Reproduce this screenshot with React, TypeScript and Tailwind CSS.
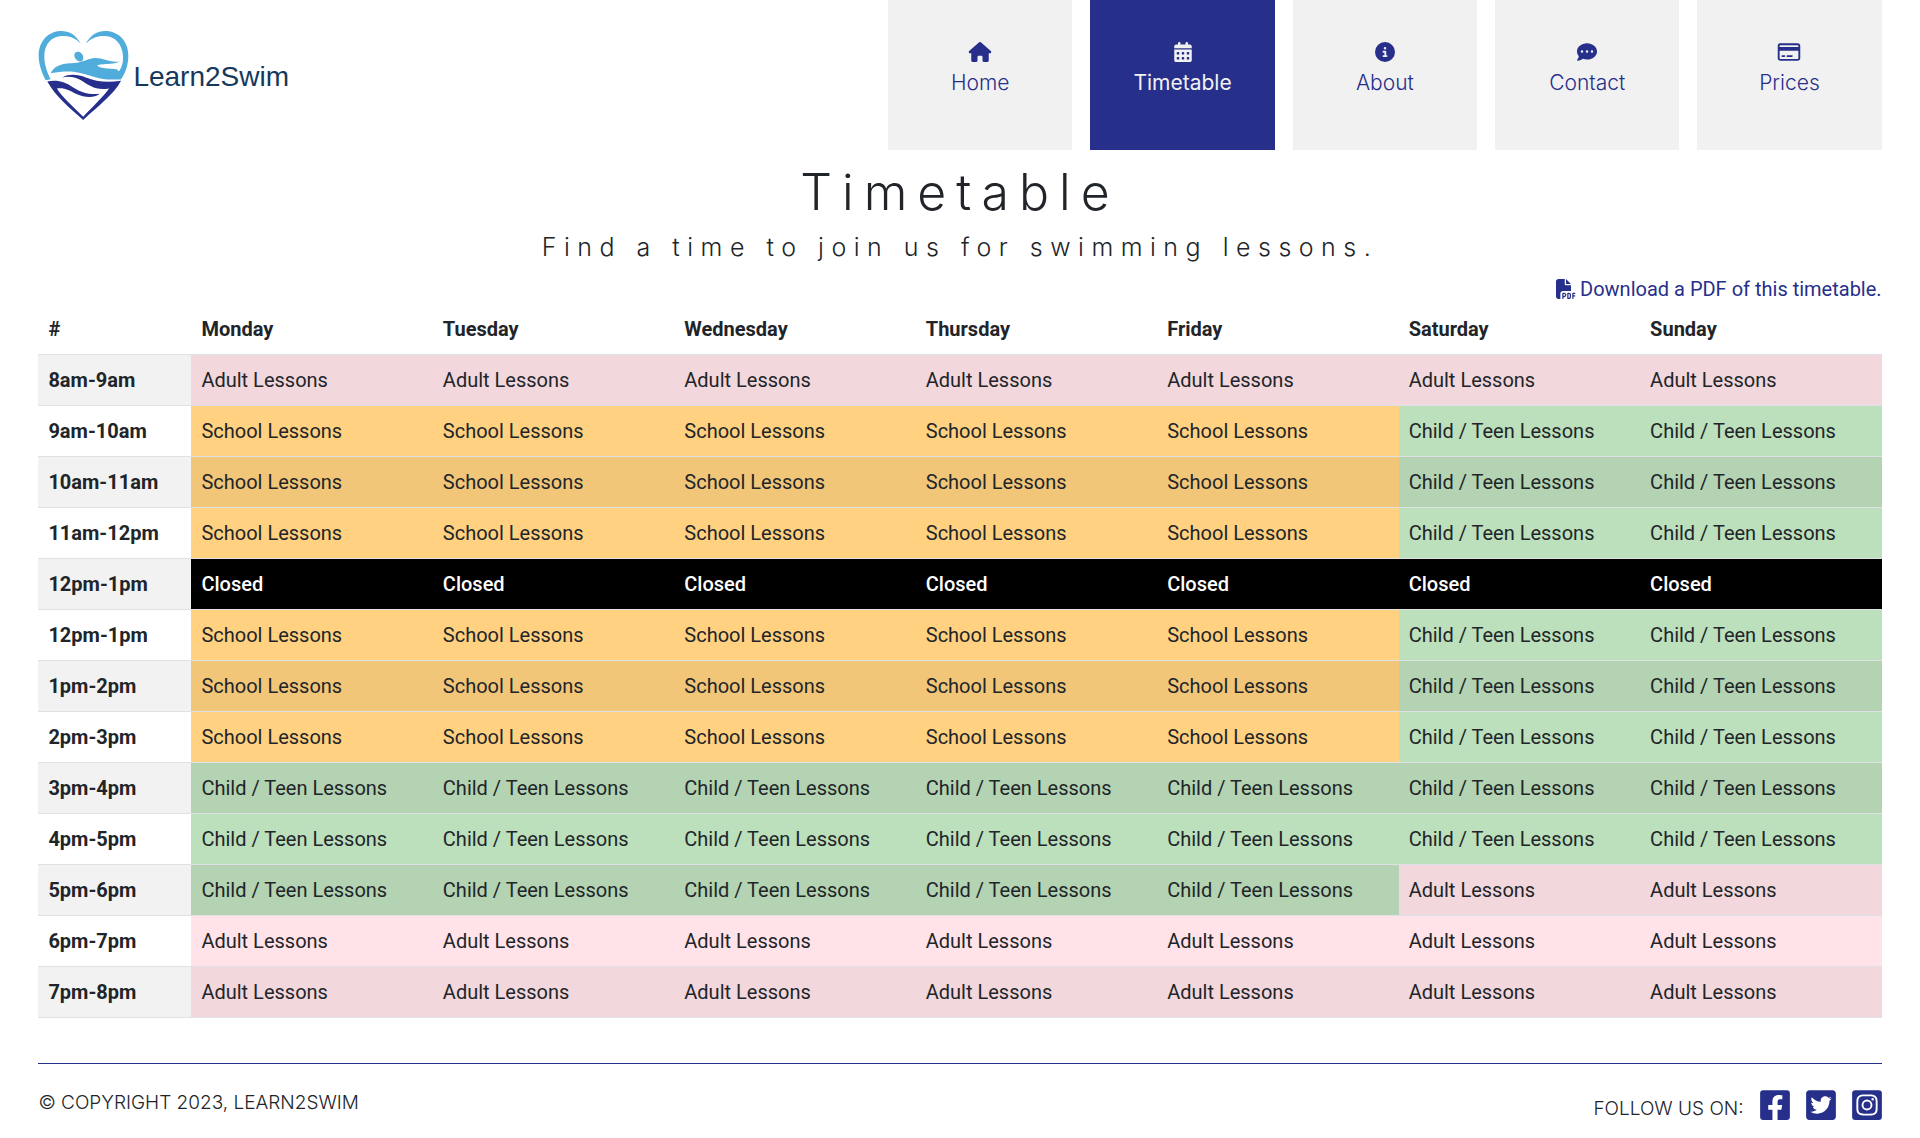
import React from "react";
import {
  FaHouse,
  FaCalendarDays,
  FaCircleInfo,
  FaCommentDots,
  FaRegCreditCard,
  FaFilePdf,
} from "react-icons/fa6";
import { FaFacebookSquare, FaTwitterSquare, FaInstagramSquare } from "react-icons/fa";

type Kind = "adult" | "school" | "child" | "closed";

const LABELS: Record<Kind, string> = {
  adult: "Adult Lessons",
  school: "School Lessons",
  child: "Child / Teen Lessons",
  closed: "Closed",
};

const PLAIN: Record<Kind, string> = {
  adult: "bg-[#ffe3e8]",
  school: "bg-[#ffd180]",
  child: "bg-[#bcdfbc]",
  closed: "bg-black font-medium text-white",
};

const STRIPED: Record<Kind, string> = {
  adult: "bg-[#f2d7dc]",
  school: "bg-[#f2c679]",
  child: "bg-[#b3d3b2]",
  closed: "bg-black font-medium text-white",
};

const DAYS = ["Monday", "Tuesday", "Wednesday", "Thursday", "Friday", "Saturday", "Sunday"];

const ROWS: { time: string; weekday: Kind; weekend: Kind }[] = [
  { time: "8am-9am", weekday: "adult", weekend: "adult" },
  { time: "9am-10am", weekday: "school", weekend: "child" },
  { time: "10am-11am", weekday: "school", weekend: "child" },
  { time: "11am-12pm", weekday: "school", weekend: "child" },
  { time: "12pm-1pm", weekday: "closed", weekend: "closed" },
  { time: "12pm-1pm", weekday: "school", weekend: "child" },
  { time: "1pm-2pm", weekday: "school", weekend: "child" },
  { time: "2pm-3pm", weekday: "school", weekend: "child" },
  { time: "3pm-4pm", weekday: "child", weekend: "child" },
  { time: "4pm-5pm", weekday: "child", weekend: "child" },
  { time: "5pm-6pm", weekday: "child", weekend: "adult" },
  { time: "6pm-7pm", weekday: "adult", weekend: "adult" },
  { time: "7pm-8pm", weekday: "adult", weekend: "adult" },
];

const NAV = [
  { label: "Home", Icon: FaHouse },
  { label: "Timetable", Icon: FaCalendarDays, active: true },
  { label: "About", Icon: FaCircleInfo },
  { label: "Contact", Icon: FaCommentDots },
  { label: "Prices", Icon: FaRegCreditCard },
];

const SOCIAL = [
  { label: "Facebook", Icon: FaFacebookSquare },
  { label: "Twitter", Icon: FaTwitterSquare },
  { label: "Instagram", Icon: FaInstagramSquare },
];

function Logo() {
  return (
    <a href="#" className="mt-[29px] flex h-[92px] items-center gap-1">
      <svg viewBox="52 58 274 272" className="size-[91px]" aria-hidden="true">
        <g fill="#50acdb">
          <path d="M181 98C164 70 146 60 122 60C82 60 54 92 54 134C54 162 64 186 75 208L90 205C79 184 71 160 71 136C71 101 91 76 124 75C148 74 165 82 181 98Z" />
          <path d="M196 98C211 72 230 60 254 60C296 60 324 92 324 134C324 162 315 186 306 199L301 206L262 206C225 204 201 190 176 186C150 180 124 182 90 187C100 168 118 158 150 157C180 157 196 146 218 142C246 138 268 158 298 151C286 162 256 156 230 163C238 174 264 171 292 176C290 177 294 184 298 178C306 166 309 152 308 136C306 101 286 76 254 75C230 74 212 82 196 98Z" />
          <ellipse cx="175" cy="137" rx="12" ry="16" transform="rotate(-38 175 137)" />
        </g>
        <g fill="#262f8c">
          <path d="M80 212C112 206 134 214 158 230C184 247 208 252 238 249C222 262 194 262 168 250C146 239 132 230 109 233C124 258 156 286 188 318C218 286 250 256 266 233C226 240 206 224 184 210C166 200 148 195 125 200C146 188 172 191 196 200C226 212 258 216 302 210C280 252 230 288 188 328C146 290 104 256 80 212Z" />
        </g>
      </svg>
      <span className="pt-1 font-['Liberation_Sans',sans-serif] text-[28px] leading-8 text-[#15395b]">
        Learn2Swim
      </span>
    </a>
  );
}

export default function App() {
  return (
    <div className="bg-white px-[2%] font-[Roboto,sans-serif] text-xl leading-[30px] text-[#212529]">
      <header className="flex items-start justify-between font-[Inter,sans-serif] text-[21px] font-light">
        <Logo />
        <nav className="flex w-[53.9%] gap-[18px]">
          {NAV.map(({ label, Icon, active }) => (
            <a
              key={label}
              href="#"
              aria-current={active ? "page" : undefined}
              className={
                active
                  ? "flex h-[150px] flex-1 flex-col items-center bg-[#262f8a] pt-[42px] font-normal text-[#f1f1f1]"
                  : "flex h-[150px] flex-1 flex-col items-center bg-[#f1f1f1] pt-[42px] text-[#262f8a]"
              }
            >
              <Icon className="h-5 w-6" />
              <span className="mt-[6px]">{label}</span>
            </a>
          ))}
        </nav>
      </header>

      <main>
        <div className="text-center font-[Inter,sans-serif] font-light">
          <h1 className="pt-3 text-[50px] leading-[60px] tracking-[0.2em]">Timetable</h1>
          <h2 className="pt-[10px] text-[25px] leading-[30px] tracking-[0.3em]">
            Find a time to join us for swimming lessons.
          </h2>
        </div>

        <div className="mt-3 flex justify-end">
          <a href="#" className="flex items-center gap-1 text-[#262f8a]">
            <FaFilePdf className="size-5" />
            Download a PDF of this timetable.
          </a>
        </div>

        <table className="w-full table-fixed border-collapse text-left">
          <thead>
            <tr className="border-b border-[#dee2e6]">
              <th scope="col" className="w-[153px] p-[10px] font-bold">#</th>
              {DAYS.map((day) => (
                <th key={day} scope="col" className="p-[10px] font-bold">{day}</th>
              ))}
            </tr>
          </thead>
          <tbody>
            {ROWS.map(({ time, weekday, weekend }, row) => {
              const striped = row % 2 === 0;
              const tone = striped ? STRIPED : PLAIN;
              return (
                <tr key={row} className="border-b border-[#dee2e6]">
                  <th scope="row" className={striped ? "bg-[#f2f2f2] p-[10px] font-bold" : "p-[10px] font-bold"}>
                    {time}
                  </th>
                  {DAYS.map((day, i) => {
                    const kind = i < 5 ? weekday : weekend;
                    return (
                      <td key={day} className={`p-[10px] ${tone[kind]}`}>
                        {LABELS[kind]}
                      </td>
                    );
                  })}
                </tr>
              );
            })}
          </tbody>
        </table>
      </main>

      <footer className="mt-[45px] flex items-start justify-between border-t border-[#262f8a] pt-6 pb-4 font-[Inter,sans-serif] text-[19px] font-light">
        <p>© COPYRIGHT 2023, LEARN2SWIM</p>
        <div className="flex items-start gap-4">
          <span className="pt-[6px]">FOLLOW US ON:</span>
          {SOCIAL.map(({ label, Icon }) => (
            <a key={label} href="#" aria-label={label} className="text-[#262f8a]">
              <Icon className="h-[34px] w-[30px]" />
            </a>
          ))}
        </div>
      </footer>
    </div>
  );
}
